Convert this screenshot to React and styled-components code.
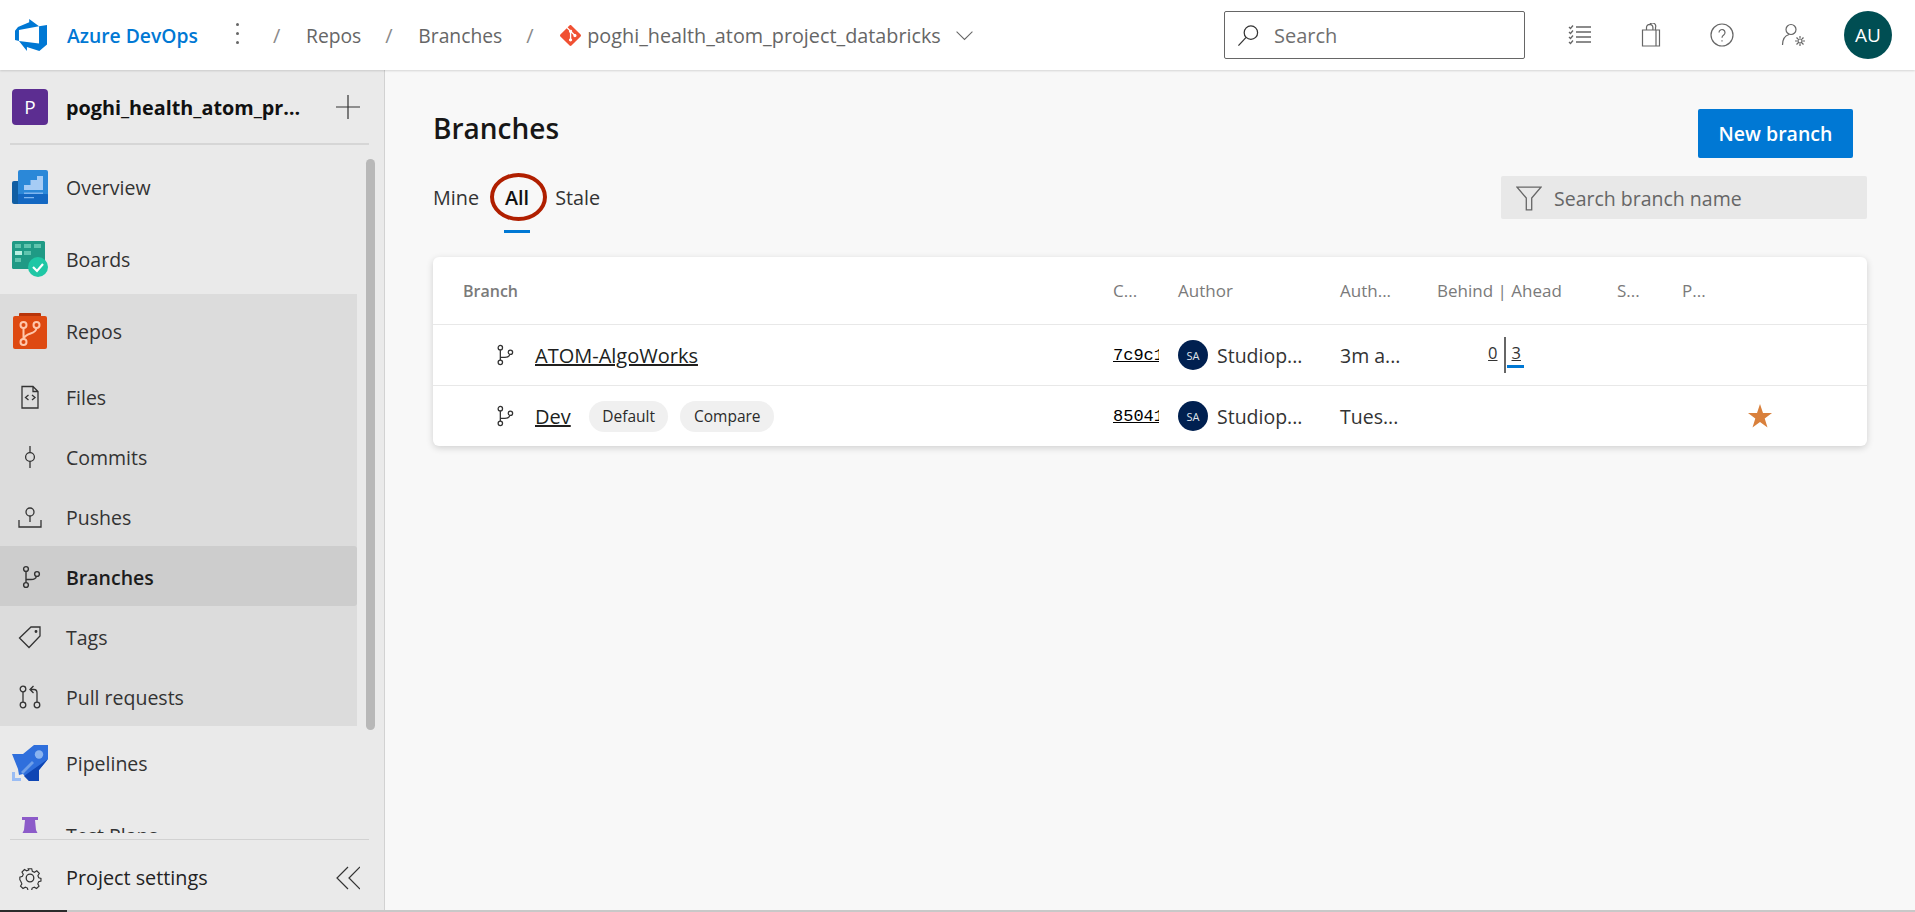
import React from "react";
import styled, { createGlobalStyle } from "styled-components";
import { SiGit } from "react-icons/si";

const GlobalStyle = createGlobalStyle`
  html, body { margin: 0; padding: 0; height: 100%; }
  body { font-family: "Open Sans", "Noto Sans", sans-serif; color: #201f1e; background: #f8f8f8; overflow: hidden; }
  * { box-sizing: border-box; }
`;

const Page = styled.div`
  display: flex;
  flex-direction: column;
  width: 1915px;
  height: 912px;
  overflow: hidden;
`;

/* top bar */
const TopBar = styled.header`
  display: flex;
  align-items: center;
  flex: 0 0 70px;
  height: 70px;
  padding: 0 23px 0 15px;
  background: #fff;
  box-shadow: 0 1px 2px rgba(0, 0, 0, 0.14);
  position: relative;
  z-index: 2;
`;
const Brand = styled.span`
  margin-left: 20px;
  width: 150px;
  font-size: 19.3px;
  font-weight: 600;
  color: #0078d4;
  white-space: nowrap;
`;
const Kebab = styled.span`
  display: flex;
  flex-direction: column;
  gap: 6px;
  width: 3px;
  margin: 0 0 4px 19px;
  i { width: 3px; height: 3px; border-radius: 50%; background: #666; }
`;
const Crumbs = styled.nav`
  display: flex;
  align-items: center;
  gap: 24px;
  margin-left: 34px;
  font-size: 19.3px;
  color: #666;
  white-space: nowrap;
`;
const Slash = styled.span`
  width: 9px;
  font-size: 20px;
  color: #8a8a8a;
`;
const RepoCrumb = styled.span`
  display: flex;
  align-items: center;
  gap: 6px;
  margin-left: 1px;
  font-size: 19.8px;
`;
const Chevron = styled.span`
  display: flex;
  margin-left: 8px;
`;
const Search = styled.div`
  display: flex;
  align-items: center;
  gap: 14px;
  width: 301px;
  height: 48px;
  margin-left: auto;
  padding-left: 12px;
  background: #fff;
  border: 1px solid #666;
  border-radius: 2px;
  font-size: 20px;
  color: #6f6f6f;
`;
const TopIcons = styled.div`
  display: flex;
  align-items: center;
  gap: 47px;
  margin-left: 43px;
`;
const TopIcon = styled.span`
  display: flex;
  width: 24px;
  justify-content: center;
`;
const UserBadge = styled.span`
  display: flex;
  align-items: center;
  justify-content: center;
  width: 48px;
  height: 48px;
  margin-left: 39px;
  border-radius: 50%;
  background: #004e53;
  color: #fff;
  font-size: 19px;
`;

/* sidebar */
const Body = styled.div`
  display: flex;
  flex: 1;
  min-height: 0;
`;
const Side = styled.aside`
  display: flex;
  flex-direction: column;
  flex: 0 0 385px;
  background: #eaeaea;
  border-right: 1px solid #d2d2d2;
`;
const ProjectRow = styled.div`
  display: flex;
  align-items: center;
  flex: 0 0 75px;
  margin: 0 15px 0 10px;
  padding: 1px 0 0 2px;
  border-bottom: 2px solid #d6d6d6;
`;
const ProjectBadge = styled.span`
  display: flex;
  flex: 0 0 36px;
  align-items: center;
  justify-content: center;
  height: 36px;
  border-radius: 4px;
  background: #5c2d91;
  color: #fff;
  font-size: 19px;
`;
const ProjectName = styled.span`
  margin-left: 18px;
  width: 243px;
  overflow: hidden;
  text-overflow: ellipsis;
  white-space: nowrap;
  font-size: 19.8px;
  font-weight: 700;
  color: #111;
`;
const Plus = styled.span`
  display: flex;
  margin-left: 27px;
`;
const Nav = styled.nav`
  position: relative;
  flex: 1;
  min-height: 0;
  padding-top: 5px;
  overflow: hidden;
  margin-bottom: 6px;
`;
const Scroll = styled.span`
  position: absolute;
  left: 366px;
  top: 14px;
  width: 9px;
  height: 571px;
  border-radius: 5px;
  background: #b8b8b8;
`;
const Group = styled.div`
  width: 357px;
  background: #dcdcdc;
`;
const NavRow = styled.a`
  display: flex;
  align-items: center;
  height: ${(p) => (p.$sub ? 60 : 72)}px;
  width: 357px;
  padding-top: 2px;
  font-size: 19.5px;
  font-weight: ${(p) => (p.$on ? 600 : 400)};
  color: ${(p) => (p.$on ? "#1c1c1c" : "#333")};
  background: ${(p) => (p.$on ? "#cdcdcd" : "transparent")};
  border-radius: ${(p) => (p.$on ? "0 3px 3px 0" : 0)};
`;
const NavIcon = styled.span`
  display: flex;
  align-items: center;
  justify-content: center;
  flex: 0 0 36px;
  height: 36px;
  margin: 0 18px 0 12px;
`;
const SideFoot = styled.div`
  display: flex;
  align-items: center;
  justify-content: space-between;
  flex: 0 0 71px;
  margin: 0 15px 0 10px;
  padding: 5px 9px 0 8px;
  border-top: 1px solid #d2d2d2;
  font-size: 19.8px;
  color: #222;
`;
const FootLeft = styled.span`
  display: flex;
  align-items: center;
  gap: 24px;
`;
const BottomEdge = styled.div`
  flex: 0 0 2px;
  background: #c8c8c8;
  &::before {
    content: "";
    display: block;
    width: 67px;
    height: 2px;
    background: #2b2b2b;
  }
`;

/* main */
const Main = styled.main`
  flex: 1;
  min-width: 0;
  padding: 0 47px 0 48px;
  background: #f8f8f8;
`;
const TitleRow = styled.div`
  display: flex;
  align-items: center;
  justify-content: space-between;
  height: 49px;
  margin-top: 39px;
  padding-right: 15px;
`;
const Title = styled.h1`
  margin: 0 0 11px;
  font-size: 28px;
  font-weight: 600;
  color: #171717;
`;
const NewBranch = styled.button`
  width: 155px;
  height: 49px;
  border: 0;
  border-radius: 2px;
  background: #0078d4;
  color: #fff;
  font: 600 19.5px "Open Sans", sans-serif;
`;
const TabRow = styled.div`
  display: flex;
  align-items: center;
  justify-content: space-between;
  height: 43px;
  margin-top: 18px;
  padding-right: 1px;
`;
const Tabs = styled.div`
  display: flex;
  gap: 26px;
  font-size: 19.8px;
  color: #333;
`;
const Tab = styled.span`
  position: relative;
  color: ${(p) => (p.$on ? "#111" : "#333")};
  font-weight: ${(p) => (p.$on ? 600 : 400)};
  ${(p) =>
    p.$on &&
    `&::after {
      content: "";
      position: absolute;
      left: -1px; right: -1px; bottom: -22px;
      height: 3px;
      background: #0078d4;
    }`}
`;
const Ring = styled.span`
  position: absolute;
  left: -15px;
  top: -11px;
  width: 57px;
  height: 48px;
  border: 4px solid #b01f00;
  border-radius: 50%;
`;
const Filter = styled.div`
  display: flex;
  align-items: center;
  gap: 12px;
  width: 366px;
  height: 43px;
  padding: 1px 0 0 15px;
  border-radius: 2px;
  background: #e8e8e8;
  font-size: 19.5px;
  color: #666;
`;
const Card = styled.section`
  margin-top: 38px;
  margin-right: 1px;
  background: #fff;
  border-radius: 6px;
  box-shadow: 0 2px 7px rgba(0, 0, 0, 0.16);
`;
const Row = styled.div`
  display: grid;
  grid-template-columns: 650px 65px 162px 97px 180px 65px 1fr;
  align-items: center;
  height: ${(p) => p.$h}px;
  padding-left: 30px;
  border-bottom: ${(p) => (p.$last ? "0" : "1px solid #e8e8e8")};
`;
const Head = styled.span`
  font-size: 16px;
  font-weight: 600;
  color: #7a7a7a;
  ${(p) => p.$thin && "font-weight: 400; font-size: 17px;"}
`;
const BranchCell = styled.div`
  display: flex;
  align-items: center;
  padding-left: 30px;
`;
const BranchLink = styled.a`
  margin-left: 20px;
  font-size: 20px;
  color: #201f1e;
  text-decoration: underline;
`;
const Pill = styled.span`
  display: flex;
  align-items: center;
  height: 31px;
  margin-left: ${(p) => p.$ml}px;
  padding: 0 13.5px;
  border-radius: 16px;
  background: #f0f0f0;
  font-size: 15.5px;
  color: #2b2b2b;
`;
const Hash = styled.a`
  display: block;
  width: 46px;
  overflow: hidden;
  white-space: nowrap;
  font: 17px "Liberation Mono", monospace;
  color: #000;
  text-decoration: underline;
`;
const Author = styled.div`
  display: flex;
  align-items: center;
  gap: 9px;
  font-size: 19.5px;
  color: #333;
`;
const AuthorBadge = styled.span`
  display: flex;
  align-items: center;
  justify-content: center;
  width: 30px;
  height: 30px;
  border-radius: 50%;
  background: #002050;
  color: #dfe3ea;
  font-size: 11px;
`;
const Age = styled.span`
  font-size: 19.5px;
  color: #333;
`;
const Diff = styled.div`
  display: flex;
  justify-content: center;
  width: 133px;
  font-size: 16.5px;
  color: #333;
`;
const DiffSide = styled.span`
  position: relative;
  display: flex;
  justify-content: ${(p) => (p.$right ? "flex-start" : "flex-end")};
  align-items: center;
  width: 19px;
  height: 36px;
  padding: ${(p) => (p.$right ? "0 0 6px 6px" : "0 6px 6px 0")};
  border-left: ${(p) => (p.$right ? "2px solid #666" : "0")};
  text-decoration: underline;
  ${(p) =>
    p.$right &&
    `&::after {
      content: "";
      position: absolute;
      left: 1px; bottom: 5px;
      width: 17px; height: 3px;
      background: #0078d4;
    }`}
`;
const StarCell = styled.div`
  display: flex;
  padding-left: 66px;
`;

/* line icons */
const Line = ({ size = 24, w = 24, h = 24, color = "#333", sw = 1.3, children }) => (
  <svg width={size} height={(size * h) / w} viewBox={`0 0 ${w} ${h}`} fill="none" stroke={color} strokeWidth={sw}>
    {children}
  </svg>
);

const BranchIcon = ({ size = 24, color = "#333" }) => (
  <Line size={size} color={color} sw={1.4}>
    <circle cx="8" cy="4" r="2.4" />
    <circle cx="8" cy="20" r="2.4" />
    <circle cx="19" cy="9" r="2.4" />
    <path d="M8 6.4v11.2M8 14.5h5c3 0 5-1.500 5.400-3.200" />
  </Line>
);

const AdoLogo = () => (
  <svg width="32" height="32" viewBox="0 0 24 24" fill="#0078d4">
    <path d="M0 8.877L2.247 5.91l8.405-3.416V.022l7.37 5.393L2.966 8.338v8.225L0 15.707zm24-4.45v14.651l-5.753 4.9-9.303-3.057v3.056l-5.978-7.416 15.057 1.798V5.415z" />
  </svg>
);

const OverviewIcon = () => (
  <svg width="36" height="34" viewBox="0 0 36 34">
    <rect x="0" y="11" width="10" height="23" rx="2" fill="#115ea3" />
    <rect x="6" y="0" width="30" height="34" rx="2" fill="#2b88d8" />
    <rect x="6" y="24" width="30" height="10" rx="1" fill="#1468c2" />
    <path d="M12 20v-5h6.500v-5H25V6h6v14z" fill="#a6ccf5" />
    <path d="M12 22.500h19V24H12zM12 27h10v1.300H12z" fill="#7fb6f0" />
  </svg>
);

const BoardsIcon = () => (
  <svg width="36" height="36" viewBox="0 0 36 36">
    <rect x="0" y="0" width="33" height="28" rx="1.500" fill="#1f9a85" />
    <path d="M3 3h6v4H3zM12 3h7v4h-7zM22 3h7v4h-7zM12 10h7v4h-7zM3 17h6v4H3z" fill="#5fc4ae" />
    <path d="M3 10h7v4H3z" fill="#b9f0e2" />
    <circle cx="26" cy="26" r="10" fill="#1fc7a5" />
    <path d="M21 26l4 4 6-7" fill="none" stroke="#fff" strokeWidth="2.200" />
  </svg>
);

const ReposIcon = () => (
  <svg width="34" height="36" viewBox="0 0 34 36">
    <rect x="6" y="0" width="22" height="6" rx="1" fill="#b93409" />
    <rect x="0" y="3" width="34" height="33" rx="2" fill="#de4a12" />
    <g fill="none" stroke="#ffc7ac" strokeWidth="2">
      <circle cx="10.500" cy="12" r="3" />
      <circle cx="23.500" cy="12" r="3" />
      <circle cx="10.500" cy="29" r="3" />
      <path d="M10.500 15v11M11 25c3-6 12-3 12.500-10" />
    </g>
  </svg>
);

const PipelinesIcon = () => (
  <svg width="36" height="36" viewBox="0 0 36 36">
    <path d="M0 9h11L22 0h14v14l-9 11v11H17l-6-7-4 1-1-6-6-15z" fill="#2f6fdc" />
    <path d="M36 14l-9 11v11H17l-5-5z" fill="#0f46b4" />
    <circle cx="27" cy="9.500" r="4.200" fill="#8ab4f0" />
    <path d="M9 27l11-11 2 2-11 11z" fill="#6f9fe8" />
    <path d="M0 27h3v6h6v3H0z" fill="#9bbdf4" />
  </svg>
);

const TestPlansIcon = () => (
  <svg width="26" height="36" viewBox="0 0 26 36">
    <path d="M5 0h16v3h-3l1 10 6 12H1l6-12 1-10H5z" fill="#8c5bc9" />
  </svg>
);

const FilesIcon = () => (
  <Line>
    <path d="M4 1.500h11l5 5v16.500H4zM15 1.500v5h5" />
    <path d="M10.500 10l-3 2.500 3 2.500M14 10l3 2.500-3 2.500" />
  </Line>
);
const CommitsIcon = () => (
  <Line>
    <circle cx="12" cy="12" r="4.400" />
    <path d="M12 1v6.600M12 16.400V23" />
  </Line>
);
const PushesIcon = () => (
  <Line>
    <circle cx="12" cy="7" r="4" />
    <path d="M12 11v6M1 15v7h22v-7" />
  </Line>
);
const TagsIcon = () => (
  <Line>
    <path d="M1.500 13L13 2h9v9L11 22.500z" />
    <circle cx="18" cy="6.500" r="0.800" fill="#333" />
  </Line>
);
const PullIcon = () => (
  <Line>
    <circle cx="5" cy="4" r="2.800" />
    <circle cx="5" cy="20" r="2.800" />
    <circle cx="19" cy="20" r="2.800" />
    <path d="M5 6.800v10.400M19 17.200V8c0-2-1-3.500-3-3.500h-3M15.500 1L12 4.500 15.500 8" />
  </Line>
);
const GearIcon = () => (
  <Line>
    <circle cx="12" cy="12" r="3.800" />
    <path d="M10 1.500h4l.7 3 2.400 1 2.700-1.600 2.800 2.800-1.600 2.700 1 2.400 2.500.7v3l-2.600.8-1 2.400 1.400 2.500-2.800 2.800-2.600-1.500-2.400 1-.7 2.900h-4l-.7-2.900-2.400-1-2.600 1.500-2.800-2.800 1.500-2.500-1-2.400L.5 14v-3l2.900-.8 1-2.400-1.500-2.600 2.800-2.800 2.600 1.500 2.400-1z" transform="translate(1.400 1.400) scale(.88)" />
  </Line>
);

const subItems = [
  ["Files", <FilesIcon />],
  ["Commits", <CommitsIcon />],
  ["Pushes", <PushesIcon />],
  ["Branches", <BranchIcon />, true],
  ["Tags", <TagsIcon />],
  ["Pull requests", <PullIcon />],
];

export default function App() {
  return (
    <Page>
      <GlobalStyle />
      <TopBar>
        <AdoLogo />
        <Brand>Azure DevOps</Brand>
        <Kebab><i /><i /><i /></Kebab>
        <Crumbs>
          <Slash>/</Slash>
          <span>Repos</span>
          <Slash>/</Slash>
          <span>Branches</span>
          <Slash>/</Slash>
          <RepoCrumb>
            <SiGit size={21} color="#f05133" />
            poghi_health_atom_project_databricks
            <Chevron>
              <Line size={19} color="#666" sw={1.3}>
                <path d="M2 7l10 10 10-10" />
              </Line>
            </Chevron>
          </RepoCrumb>
        </Crumbs>
        <Search>
          <Line size={23} color="#333" sw={1.3}>
            <circle cx="14.500" cy="9" r="7" />
            <path d="M9.500 14L1.500 22.500" />
          </Line>
          Search
        </Search>
        <TopIcons>
          <TopIcon>
            <Line color="#666" sw={1.3}>
              <path d="M8 4h15M8 9h15M8 14h15M8 19h15" />
              <path d="M1 4l1.500 1.500L5 2.500M1 9l1.500 1.500L5 7.500M1 14l1.500 1.500L5 12.500M1 19l1.500 1.500L5 17.500" />
            </Line>
          </TopIcon>
          <TopIcon>
            <Line color="#666" sw={1.2}>
              <path d="M3.500 7h17v16h-17zM17 7v16M7.500 7V4.500a3.200 3.200 0 0 1 6.400 0V7M10.500 2a3.200 3.200 0 0 1 6 2.500V7" />
            </Line>
          </TopIcon>
          <TopIcon>
            <Line color="#666" sw={1.2}>
              <circle cx="12" cy="12" r="11" />
              <path d="M9 9.500a3 3 0 1 1 4.700 2.500c-1.200.8-1.700 1.400-1.700 2.800M12 17.200v1.300" />
            </Line>
          </TopIcon>
          <TopIcon>
            <Line color="#666" sw={1.2}>
              <circle cx="10" cy="6.500" r="5" />
              <path d="M1.500 22c0-6 3-9.500 6.500-10.500" />
              <circle cx="19" cy="18" r="2" />
              <path d="M19 13v2M19 21v2M14 18h2M22 18h2M15.500 14.500l1.500 1.500M21 20l1.500 1.500M15.500 21.500L17 20M21 16l1.500-1.500" />
            </Line>
          </TopIcon>
        </TopIcons>
        <UserBadge>AU</UserBadge>
      </TopBar>
      <Body>
        <Side>
          <ProjectRow>
            <ProjectBadge>P</ProjectBadge>
            <ProjectName>poghi_health_atom_project_databricks</ProjectName>
            <Plus>
              <Line size={24} color="#333" sw={1.2}>
                <path d="M0 12h24M12 0v24" />
              </Line>
            </Plus>
          </ProjectRow>
          <Nav>
            <NavRow><NavIcon><OverviewIcon /></NavIcon>Overview</NavRow>
            <NavRow><NavIcon><BoardsIcon /></NavIcon>Boards</NavRow>
            <Group>
              <NavRow><NavIcon><ReposIcon /></NavIcon>Repos</NavRow>
              {subItems.map(([label, icon, on]) => (
                <NavRow key={label} $sub $on={on}>
                  <NavIcon>{icon}</NavIcon>
                  {label}
                </NavRow>
              ))}
            </Group>
            <NavRow><NavIcon><PipelinesIcon /></NavIcon>Pipelines</NavRow>
            <NavRow><NavIcon><TestPlansIcon /></NavIcon>Test Plans</NavRow>
            <Scroll />
          </Nav>
          <SideFoot>
            <FootLeft><GearIcon />Project settings</FootLeft>
            <Line size={24} color="#333" sw={1.2}>
              <path d="M12 1L1 12l11 11M24 1L13 12l11 11" />
            </Line>
          </SideFoot>
        </Side>
        <Main>
          <TitleRow>
            <Title>Branches</Title>
            <NewBranch>New branch</NewBranch>
          </TitleRow>
          <TabRow>
            <Tabs>
              <Tab>Mine</Tab>
              <Tab $on>All<Ring /></Tab>
              <Tab>Stale</Tab>
            </Tabs>
            <Filter>
              <Line size={26} color="#666" sw={1.2}>
                <path d="M1 2h22l-8.500 10v11h-5V12z" />
              </Line>
              Search branch name
            </Filter>
          </TabRow>
          <Card>
            <Row $h={68}>
              <Head>Branch</Head>
              <Head $thin>C...</Head>
              <Head $thin>Author</Head>
              <Head $thin>Auth...</Head>
              <Head $thin>Behind | Ahead</Head>
              <Head $thin>S...</Head>
              <Head $thin>P...</Head>
            </Row>
            <Row $h={61}>
              <BranchCell>
                <BranchIcon size={22} />
                <BranchLink>ATOM-AlgoWorks</BranchLink>
              </BranchCell>
              <Hash>7c9c1e4a</Hash>
              <Author><AuthorBadge>SA</AuthorBadge>Studiop...</Author>
              <Age>3m a...</Age>
              <Diff>
                <DiffSide>0</DiffSide>
                <DiffSide $right>3</DiffSide>
              </Diff>
            </Row>
            <Row $h={60} $last>
              <BranchCell>
                <BranchIcon size={22} />
                <BranchLink>Dev</BranchLink>
                <Pill $ml={18}>Default</Pill>
                <Pill $ml={12}>Compare</Pill>
              </BranchCell>
              <Hash>85041d7b</Hash>
              <Author><AuthorBadge>SA</AuthorBadge>Studiop...</Author>
              <Age>Tues...</Age>
              <span />
              <span />
              <StarCell>
                <svg width="24" height="24" viewBox="0 0 24 24" fill="#d9803c">
                  <path d="M12 0l3 8.900h9l-7.300 5.500 2.800 9.100L12 18l-7.500 5.500 2.800-9.100L0 8.900h9z" />
                </svg>
              </StarCell>
            </Row>
          </Card>
        </Main>
      </Body>
      <BottomEdge />
    </Page>
  );
}
